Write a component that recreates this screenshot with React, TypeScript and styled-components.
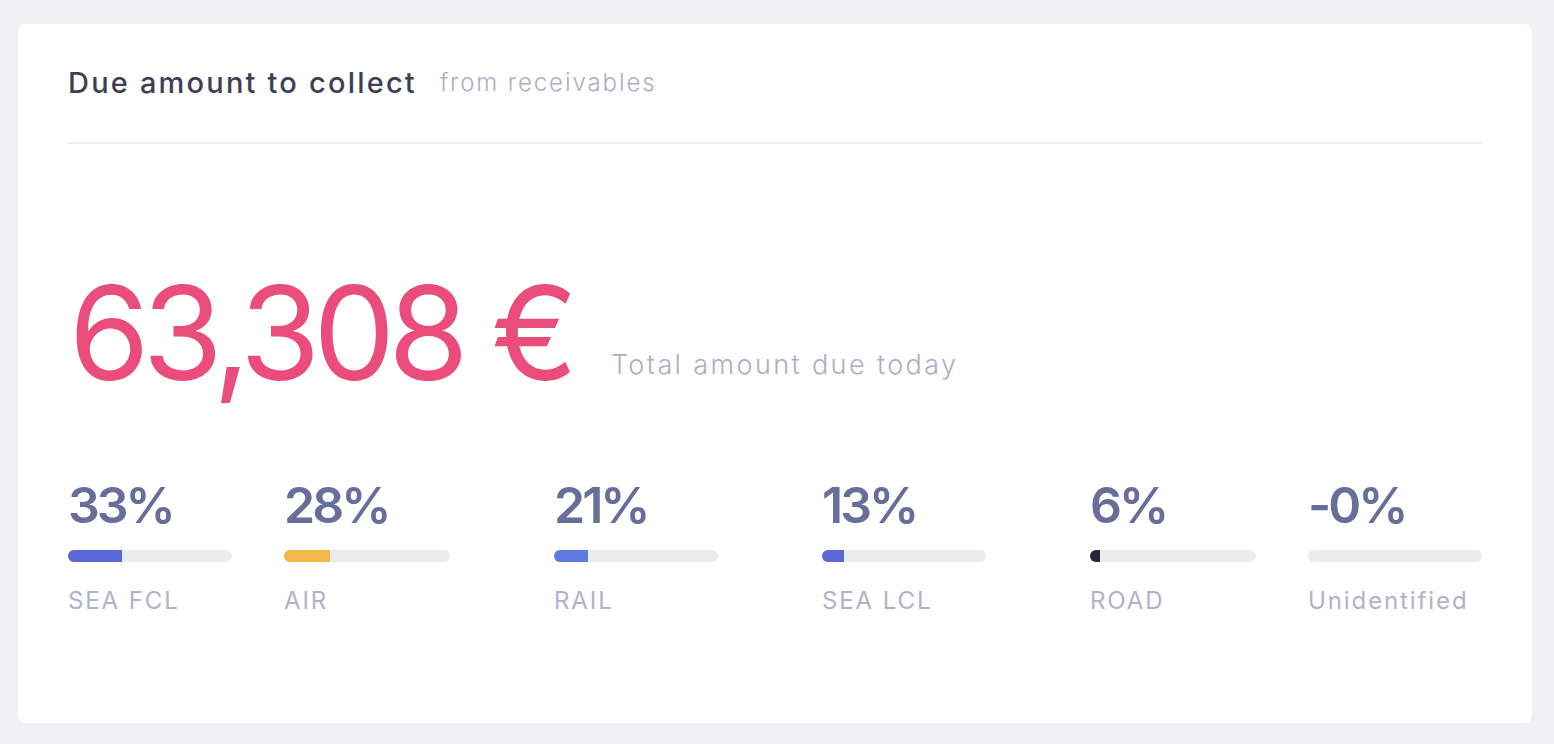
import React from "react";
import styled, { createGlobalStyle } from "styled-components";

const Global = createGlobalStyle`
  html, body { margin: 0; padding: 0; background: #f0f1f5; }
  body { font-family: "Inter", "Noto Sans", sans-serif; }
  * { box-sizing: border-box; }
`;

const Page = styled.div`
  padding: 24px 22px 21px 18px;
  min-height: 744px;
`;

const Card = styled.section`
  background: #ffffff;
  border-radius: 8px;
  height: 699px;
  padding: 0 50px;
  display: flex;
  flex-direction: column;
`;

const Header = styled.header`
  height: 120px;
  display: flex;
  align-items: center;
  gap: 23px;
  border-bottom: 2px solid #ecedf2;
  padding-bottom: 2px;
`;

const Title = styled.h2`
  margin: 0;
  font-size: 29px;
  font-weight: 500;
  color: #3f3e56;
  letter-spacing: 2.2px;
`;

const Subtitle = styled.span`
  font-size: 24px;
  font-weight: 300;
  color: #acaec8;
  letter-spacing: 1.9px;
`;

const AmountRow = styled.div`
  display: flex;
  align-items: baseline;
  gap: 40px;
  margin-top: 124px;
  padding-left: 1px;
`;

const Amount = styled.div`
  font-size: 130px;
  line-height: 1;
  font-weight: 400;
  color: #ea4c7c;
  letter-spacing: -7px;
`;

const AmountCaption = styled.span`
  font-size: 27px;
  font-weight: 300;
  color: #acaec8;
  letter-spacing: 2.4px;
  position: relative;
  top: -6px;
`;

const Stats = styled.div`
  display: grid;
  grid-template-columns: 216px 270px 268px 268px 218px 1fr;
  margin-top: 82px;
`;

const Stat = styled.div`
  display: flex;
  flex-direction: column;
`;

const Percent = styled.div`
  font-size: 50px;
  line-height: 1;
  font-weight: 600;
  color: #676e9a;
  letter-spacing: -3px;
  height: 50px;
`;

const Track = styled.div<{ $w: number }>`
  width: ${(p) => p.$w}px;
  height: 12px;
  border-radius: 6px;
  background: #ebecf0;
  overflow: hidden;
  margin-top: 20px;
`;

const Fill = styled.div<{ $color: string }>`
  height: 100%;
  background: ${(p) => p.$color};
`;

const Label = styled.div`
  margin-top: 24px;
  font-size: 24px;
  font-weight: 400;
  color: #b0b2ca;
  letter-spacing: 1.9px;
`;

const stats = [
  { pct: "33%", label: "SEA FCL", color: "#5b67d6", fill: 54, w: 164 },
  { pct: "28%", label: "AIR", color: "#f3b84a", fill: 46, w: 166 },
  { pct: "21%", label: "RAIL", color: "#5c7ae0", fill: 34, w: 164 },
  { pct: "13%", label: "SEA LCL", color: "#5b67d6", fill: 22, w: 164 },
  { pct: "6%", label: "ROAD", color: "#23253a", fill: 10, w: 166 },
  { pct: "-0%", label: "Unidentified", color: "#5b67d6", fill: 0, w: 174 },
];

export default function App() {
  return (
    <>
      <Global />
      <Page>
        <Card>
          <Header>
            <Title>Due amount to collect</Title>
            <Subtitle>from receivables</Subtitle>
          </Header>
          <AmountRow>
            <Amount>63,308 €</Amount>
            <AmountCaption>Total amount due today</AmountCaption>
          </AmountRow>
          <Stats>
            {stats.map((s) => (
              <Stat key={s.label}>
                <Percent>{s.pct}</Percent>
                <Track $w={s.w}>
                  <Fill $color={s.color} style={{ width: s.fill }} />
                </Track>
                <Label>{s.label}</Label>
              </Stat>
            ))}
          </Stats>
        </Card>
      </Page>
    </>
  );
}
